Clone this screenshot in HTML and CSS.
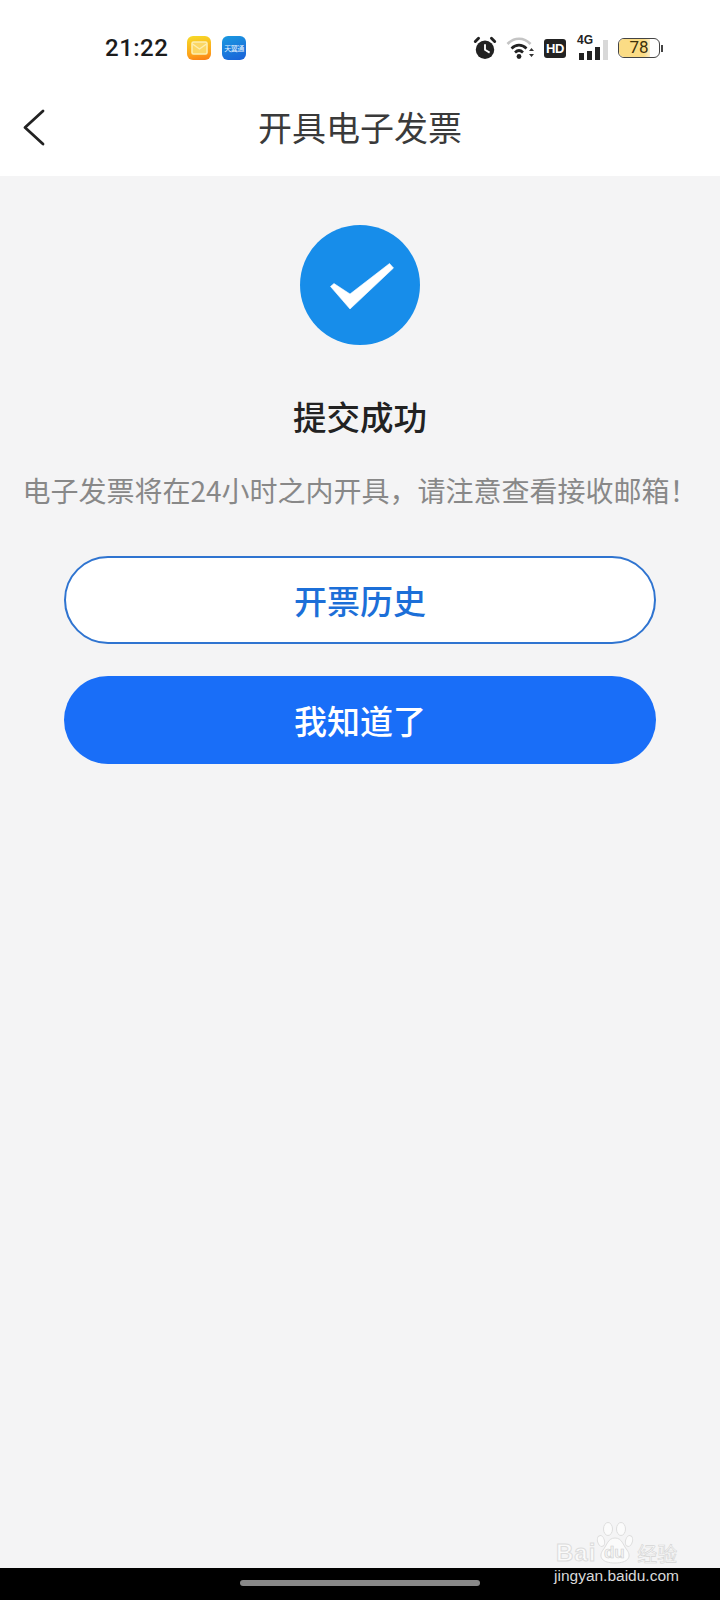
FILE: index.html
```html
<!doctype html>
<html lang="zh">
    <head>
        <meta charset="utf-8">
        <title>开具电子发票</title>
        <link rel="stylesheet" href="styles.css">
    </head>

    <body>
        <div id="phone">
            <div id="status-bar">
                <span id="clock">21:22</span>
                <span class="app-icon mail-app">
                    <svg width="17" height="14" viewBox="0 0 17 14">
                        <rect x="1" y="1" width="15" height="12" rx="1.5" fill="#fbd765" stroke="#fdeeb0" stroke-width="1.6"/>
                        <path d="M1.5 3 L8.5 8 L15.5 3" fill="none" stroke="#fdeeb0" stroke-width="1.4"/>
                    </svg>
                </span>
                <span class="app-icon cloud-app">天翼通</span>
                <span id="status-right">
                    <svg class="alarm" width="24" height="24" viewBox="0 0 26 26">
                        <circle cx="13" cy="15" r="10" fill="#222"/>
                        <path d="M2.5 6 L6 2.5 M23.5 6 L20 2.5" stroke="#222" stroke-width="3.2" stroke-linecap="round"/>
                        <path d="M13 9 V15 L18 18" fill="none" stroke="#fff" stroke-width="2"/>
                    </svg>
                    <svg class="wifi" width="30" height="24" viewBox="0 0 30 24">
                        <path d="M1.5 8 C8 1 18 1 24.5 8" fill="none" stroke="#c4c4c4" stroke-width="2.6"/>
                        <path d="M5.5 12.5 C10 8 16 8 20.5 12.5" fill="none" stroke="#222" stroke-width="2.6"/>
                        <path d="M9 16.5 C11.5 14 14.5 14 17 16.5" fill="none" stroke="#222" stroke-width="2.6"/>
                        <circle cx="13" cy="20.5" r="2.4" fill="#222"/>
                        <path d="M23 15 L25.5 12 L28 15 Z M23 18 L25.5 21 L28 18 Z" fill="#333"/>
                    </svg>
                    <span class="hd-badge">HD</span>
                    <span class="signal">
                        <span class="signal-label">4G</span>
                        <span class="signal-bars">
                            <i class="bar bar-1"></i>
                            <i class="bar bar-2"></i>
                            <i class="bar bar-3"></i>
                            <i class="bar bar-4"></i>
                        </span>
                    </span>
                    <span class="battery">
                        <span class="battery-body">
                            <span class="battery-fill"></span>
                            <span class="battery-level">78</span>
                        </span>
                        <span class="battery-tip"></span>
                    </span>
                </span>
            </div>

            <div id="nav-bar">
                <svg class="back" width="24" height="38" viewBox="0 0 24 38">
                    <path d="M21 3 L3 19.5 L21 36" fill="none" stroke="#222" stroke-width="2.8" stroke-linecap="round" stroke-linejoin="round"/>
                </svg>
                <h1 id="nav-title">开具电子发票</h1>
            </div>

            <div id="content">
                <div class="success-icon">
                    <svg width="64" height="47" viewBox="0 0 64 47">
                        <path d="M0.5 23.5 L4 20.5 L20 31 L59.5 0.5 L63.5 5 L20 46 Z" fill="#fff" stroke="#fff" stroke-width="0.6" stroke-linejoin="round"/>
                    </svg>
                </div>
                <h2 class="result-title">提交成功</h2>
                <p class="result-text">电子发票将在24小时之内开具，请注意查看接收邮箱！</p>
                <button class="btn btn-outline">开票历史</button>
                <button class="btn btn-solid">我知道了</button>
            </div>

            <div id="home-bar">
                <span class="home-pill"></span>
            </div>

            <!-- baidu watermark sits over the page and the black bar -->
            <div id="watermark">
                <svg class="paw" width="38" height="42" viewBox="0 0 38 42">
                    <g fill="#fbfbfb" stroke="#dedede" stroke-width="1">
                        <ellipse cx="5" cy="19" rx="3.5" ry="5.5" transform="rotate(-15 5 19)"/>
                        <ellipse cx="12" cy="7" rx="4.5" ry="6.5"/>
                        <ellipse cx="25" cy="7" rx="4.5" ry="6.5"/>
                        <ellipse cx="33" cy="19" rx="3.5" ry="5.5" transform="rotate(15 33 19)"/>
                        <path d="M19 16 C12 16 11 23 7 28 C2 35 6 41 19 41 C32 41 36 35 31 28 C27 23 26 16 19 16 Z"/>
                    </g>
                </svg>
                <div class="wm-row">
                    <span class="wm-logo">Bai</span>
                    <span class="wm-du">du</span>
                    <span class="wm-cn">经验</span>
                </div>
                <div class="wm-url">jingyan.baidu.com</div>
            </div>
        </div>
    </body>
</html>
```

FILE: styles.css
```css
* {
    box-sizing: border-box;
}

body {
    margin: 0;
    font-family: "Noto Sans CJK SC", "Liberation Sans", sans-serif;
}

#phone {
    position: relative;
    display: flex;
    flex-direction: column;
    width: 720px;
    height: 1600px;
    overflow: hidden;
    background-color: #f4f4f5;
}

/* status bar */

#status-bar {
    display: flex;
    align-items: center;
    height: 96px;
    padding-left: 105px;
    background-color: #fff;
}

#clock {
    width: 82px;
    font-family: Roboto, sans-serif;
    font-size: 24px;
    font-weight: 500;
    letter-spacing: 0.5px;
    color: #1c1c1c;
}

.app-icon {
    display: flex;
    align-items: center;
    justify-content: center;
    width: 24px;
    height: 24px;
    margin-right: 11px;
    border-radius: 6px;
}

.mail-app {
    background: linear-gradient(170deg, #f6dc28, #fda21a 70%, #f97a16);
}

.cloud-app {
    font-size: 7px;
    letter-spacing: -0.5px;
    white-space: nowrap;
    color: #e6f4ff;
    background: linear-gradient(160deg, #1a9ae0, #1a60d8);
}

#status-right {
    display: flex;
    align-items: center;
    margin-left: 216px;
}

.alarm {
    margin-right: 9px;
}

.wifi {
    margin-right: 8px;
}

.hd-badge {
    width: 22px;
    height: 19px;
    margin-right: 11px;
    border-radius: 3px;
    font-family: "Liberation Sans", sans-serif;
    font-size: 13px;
    font-weight: bold;
    letter-spacing: -0.5px;
    line-height: 19px;
    text-align: center;
    color: #fff;
    background-color: #222;
}

.signal {
    position: relative;
    width: 31px;
    height: 24px;
    margin-right: 10px;
}

.signal-label {
    position: absolute;
    top: -2px;
    left: 0;
    font-family: "Liberation Sans", sans-serif;
    font-size: 12px;
    font-weight: bold;
    line-height: 12px;
    color: #222;
}

.signal-bars {
    display: flex;
    align-items: flex-end;
    gap: 3px;
    height: 100%;
    padding-left: 2px;
}

.bar {
    width: 5px;
    background-color: #222;
}

.bar-1 {
    height: 7px;
}

.bar-2 {
    height: 9px;
}

.bar-3 {
    height: 13px;
}

.bar-4 {
    height: 20px;
    background-color: #d8d8d8;
}

.battery {
    display: flex;
    align-items: center;
}

.battery-body {
    position: relative;
    width: 42px;
    height: 20px;
    overflow: hidden;
    border: 1.5px solid #444;
    border-radius: 6px;
}

.battery-fill {
    position: absolute;
    top: 0;
    bottom: 0;
    left: 0;
    width: 31px;
    background: linear-gradient(90deg, #fbdc85 80%, #fdeec8);
}

.battery-level {
    position: relative;
    display: block;
    font-family: Roboto, sans-serif;
    font-size: 17px;
    line-height: 17px;
    text-align: center;
    color: #3d300c;
}

.battery-tip {
    width: 2px;
    height: 7px;
    margin-left: 1px;
    background-color: #444;
}

/* nav bar */

#nav-bar {
    position: relative;
    display: flex;
    align-items: center;
    justify-content: center;
    height: 80px;
    background-color: #fff;
}

.back {
    position: absolute;
    top: 12px;
    left: 22px;
}

#nav-title {
    margin: 0 0 20px;
    font-size: 34px;
    font-weight: 400;
    color: #3a3a3a;
}

/* content */

#content {
    display: flex;
    flex: 1;
    flex-direction: column;
    align-items: center;
    padding-top: 49px;
}

.success-icon {
    display: flex;
    align-items: center;
    justify-content: center;
    width: 120px;
    height: 120px;
    border-radius: 50%;
    background-color: #178dea;
}

.success-icon svg {
    margin: 3px 0 0 3px;
}

.result-title {
    margin: 47px 0 0;
    font-size: 33.5px;
    font-weight: 500;
    line-height: 48px;
    color: #222;
}

.result-text {
    margin: 30px 0 0;
    font-size: 28px;
    line-height: 40px;
    white-space: nowrap;
    color: #888;
}

.btn {
    width: 592px;
    height: 88px;
    padding: 0;
    border-radius: 44px;
    font-family: inherit;
    font-size: 33px;
    font-weight: 500;
}

.btn-outline {
    margin-top: 46px;
    border: 2px solid #2f74d0;
    color: #1c6fd8;
    background-color: #fff;
}

.btn-solid {
    margin-top: 32px;
    border: 0;
    color: #fff;
    background-color: #196ef8;
}

/* home indicator */

#home-bar {
    display: flex;
    justify-content: center;
    height: 32px;
    padding-top: 12px;
    background-color: #000;
}

.home-pill {
    width: 240px;
    height: 6px;
    border-radius: 3px;
    background-color: #888;
}

/* watermark */

#watermark {
    position: absolute;
    top: 1522px;
    left: 553px;
    width: 130px;
}

.paw {
    position: absolute;
    top: 0;
    left: 43px;
}

.wm-row {
    position: absolute;
    top: 16px;
    left: 3px;
    display: flex;
    align-items: center;
    height: 30px;
    white-space: nowrap;
}

.wm-logo {
    font-family: "Liberation Sans", sans-serif;
    font-size: 24px;
    font-weight: bold;
    letter-spacing: 1px;
    color: #fafafa;
    -webkit-text-stroke: 1px #dcdcdc;
}

.wm-du {
    position: relative;
    width: 32px;
    margin-left: 2px;
    font-family: "Liberation Sans", sans-serif;
    font-size: 17px;
    font-weight: bold;
    text-align: center;
    color: #f4f4f4;
    -webkit-text-stroke: 0.6px #d0d0d0;
}

.wm-cn {
    margin-left: 7px;
    font-size: 20px;
    color: #fafafa;
    -webkit-text-stroke: 0.6px #d4d4d4;
}

.wm-url {
    position: absolute;
    top: 45px;
    left: 1px;
    font-family: "Liberation Sans", sans-serif;
    font-size: 15.5px;
    white-space: nowrap;
    color: #d8d8d8;
}
```
